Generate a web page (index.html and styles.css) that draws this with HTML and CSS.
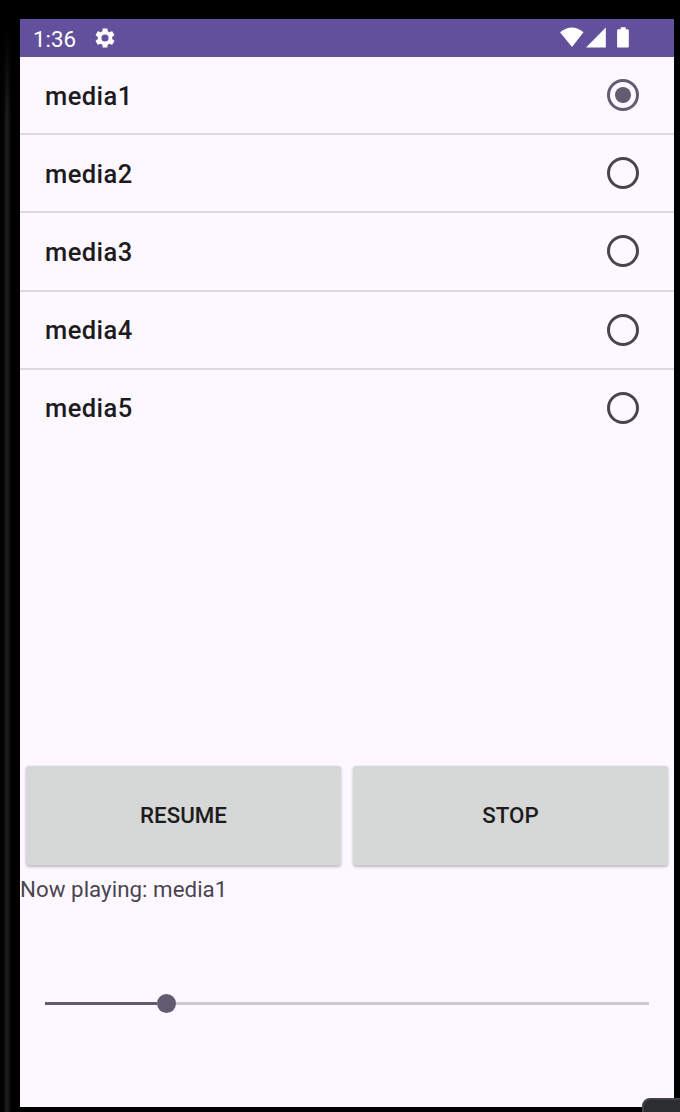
FILE: index.html
```html
<!DOCTYPE html>
<html lang="en">
<head>
<meta charset="utf-8">
<title>Media player</title>
<link rel="stylesheet" href="styles.css">
</head>
<body>
<div class="device">
  <main class="screen">
    <header class="status">
      <span class="time">1:36</span>
      <svg class="gear" viewBox="0 0 24 24"><path d="M19.14 12.94c.04-.3.06-.61.06-.94s-.02-.64-.07-.94l2.03-1.58c.18-.14.23-.41.12-.61l-1.92-3.32c-.12-.22-.37-.29-.59-.22l-2.39.96c-.5-.38-1.03-.7-1.62-.94l-.36-2.54c-.04-.24-.24-.41-.48-.41h-3.84c-.24 0-.43.17-.47.41l-.36 2.54c-.59.24-1.13.57-1.62.94l-2.39-.96c-.22-.08-.47 0-.59.22L2.74 8.87c-.12.21-.08.47.12.61l2.03 1.58c-.05.3-.09.63-.09.94s.02.64.07.94l-2.03 1.58c-.18.14-.23.41-.12.61l1.92 3.32c.12.22.37.29.59.22l2.39-.96c.5.38 1.03.7 1.62.94l.36 2.54c.05.24.24.41.48.41h3.84c.24 0 .44-.17.47-.41l.36-2.54c.59-.24 1.13-.56 1.62-.94l2.39.96c.22.08.47 0 .59-.22l1.92-3.32c.12-.22.07-.47-.12-.61zM12 15.6A3.6 3.6 0 1 1 12 8.4a3.6 3.6 0 0 1 0 7.2z"/></svg>
      <svg class="signals" viewBox="0 0 70 22"><path d="M0 5.3Q12 -4.5 23.5 5.3L12 20Z"/><path d="M26 20.5 45.8.5V20.5Z"/><path d="M60.7.2h5v2h1.9q1.2 0 1.2 1.2v16q0 1.2-1.2 1.2h-9.2q-1.3 0-1.3-1.2v-16q0-1.2 1.3-1.2h2.3z"/></svg>
    </header>
    <ul class="list">
      <li class="row"><span>media1</span><i class="radio checked"></i></li>
      <li class="row"><span>media2</span><i class="radio"></i></li>
      <li class="row"><span>media3</span><i class="radio"></i></li>
      <li class="row"><span>media4</span><i class="radio"></i></li>
      <li class="row"><span>media5</span><i class="radio"></i></li>
    </ul>
    <div class="actions"><button class="btn">RESUME</button><button class="btn">STOP</button></div>
    <p class="now">Now playing: media1</p>
    <div class="slider"><div class="played"></div><div class="thumb"></div><div class="rest"></div></div>
  </main>
  <div class="corner"></div>
</div>
</body>
</html>
```
FILE: styles.css
```css
* { box-sizing: border-box; }
body { margin: 0; font-family: Roboto, sans-serif; }
.device {
  position: relative;
  width: 680px;
  height: 1112px;
  padding: 19px 6px 5.5px 20px;
  overflow: hidden;
  background: linear-gradient(90deg, #000 0, #040404 4px, #1c1c1c 6px, #1c1c1c 8px, #080808 10px, #000 12px);
}
.device::before {
  content: "";
  position: absolute;
  top: 0;
  left: 0;
  width: 12px;
  height: 120px;
  background: linear-gradient(#000 0, #000 25%, transparent);
}
.device::after {
  content: "";
  position: absolute;
  inset: 0 0 0 674px;
  background: #000;
}
.screen {
  display: flex;
  flex-direction: column;
  height: 1087.5px;
  background: #fdf8ff;
  color: #1d1b20;
  box-shadow: 0 -19px #000, 0 6px #000;
}
.status {
  display: flex;
  align-items: center;
  height: 38px;
  flex: none;
  padding: 0 44px 0 13px;
  background: #63509d;
  color: #fff;
}
.status svg { fill: #fff; }
.time { width: 60px; font-size: 22.3px; line-height: 38px; padding-top: 2px; }
.gear { width: 24px; height: 24px; }
.signals { width: 70px; height: 22px; margin-left: auto; }
.list { flex: none; height: 709px; margin: 0; padding: 0; list-style: none; }
.row {
  display: flex;
  align-items: center;
  justify-content: space-between;
  height: 78.2px;
  padding: 0 35px 0 25px;
  border-bottom: 2px solid #ddd7e0;
  font-size: 25.5px;
  font-weight: 500;
  letter-spacing: .45px;
}
.row:last-child { border-bottom-color: transparent; }
.row span { padding-top: 1px; }
.radio {
  display: flex;
  width: 32px;
  height: 32px;
  border: 3px solid #49454f;
  border-radius: 50%;
}
.radio.checked { border-color: #625b71; }
.checked::before {
  content: "";
  width: 16px;
  height: 16px;
  margin: auto;
  border-radius: 50%;
  background: #625b71;
}
.actions {
  display: flex;
  gap: 12px;
  flex: none;
  padding: 0 6px;
}
.btn {
  flex: 1;
  height: 98.5px;
  padding: 0;
  border: 0;
  border-radius: 3px;
  background: #d6d8d7;
  box-shadow: 0 1.5px 3px rgba(0, 0, 0, .25);
  color: #1d1b20;
  font: 500 22.3px Roboto, sans-serif;
}
.now {
  margin: 8.5px 0 0;
  font-size: 22.3px;
  line-height: 32px;
  letter-spacing: .04px;
  color: #49454f;
}
.slider {
  display: flex;
  align-items: center;
  height: 20px;
  margin: 88px 25px 0;
}
.played { width: 112px; height: 3px; background: #625b71; }
.thumb { width: 19px; height: 19px; border-radius: 50%; background: #625b71; }
.rest { flex: 1; height: 3px; background: #cfcad1; }
.corner {
  position: absolute;
  z-index: 1;
  left: 642px;
  top: 1098px;
  width: 50px;
  height: 30px;
  border: 2px solid #414246;
  border-radius: 8px;
  background: #2c2d30;
}
```
